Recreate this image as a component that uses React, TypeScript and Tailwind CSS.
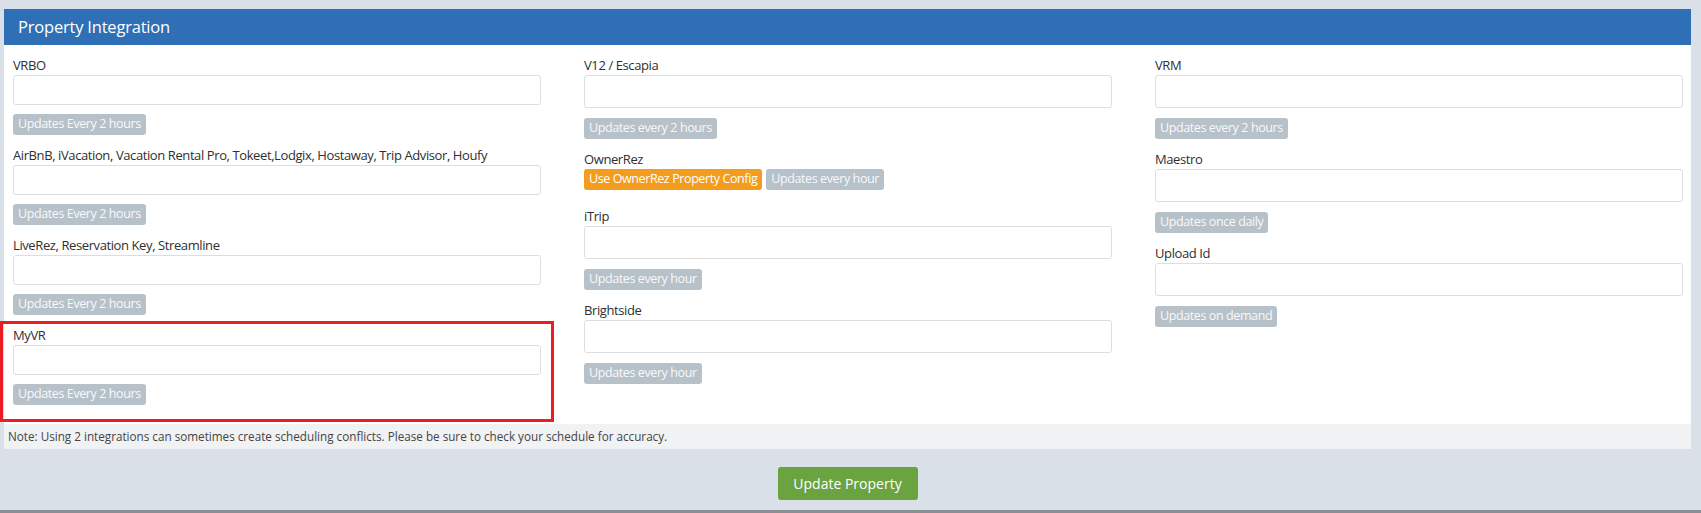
import React from "react";

type Field = {
  label: string;
  badges: { text: string; tone?: "gray" | "orange" }[];
  input?: boolean;
  gapAfter?: string;
};

const colOne: Field[] = [
  { label: "VRBO", badges: [{ text: "Updates Every 2 hours" }] },
  {
    label:
      "AirBnB, iVacation, Vacation Rental Pro, Tokeet,Lodgix, Hostaway, Trip Advisor, Houfy",
    badges: [{ text: "Updates Every 2 hours" }],
  },
  { label: "LiveRez, Reservation Key, Streamline", badges: [{ text: "Updates Every 2 hours" }] },
  { label: "MyVR", badges: [{ text: "Updates Every 2 hours" }] },
];

const colTwo: Field[] = [
  { label: "V12 / Escapia", badges: [{ text: "Updates every 2 hours" }] },
  {
    label: "OwnerRez",
    input: false,
    gapAfter: "mb-[17px]",
    badges: [
      { text: "Use OwnerRez Property Config", tone: "orange" },
      { text: "Updates every hour" },
    ],
  },
  { label: "iTrip", badges: [{ text: "Updates every hour" }] },
  { label: "Brightside", badges: [{ text: "Updates every hour" }] },
];

const colThree: Field[] = [
  { label: "VRM", badges: [{ text: "Updates every 2 hours" }] },
  { label: "Maestro", badges: [{ text: "Updates once daily" }] },
  { label: "Upload Id", badges: [{ text: "Updates on demand" }] },
];

function Badge({ text, tone = "gray" }: { text: string; tone?: "gray" | "orange" }) {
  return (
    <span
      className={
        tone === "orange"
          ? "inline-flex h-[21px] items-center rounded-[3px] bg-[#f49c1d] px-[5px] text-[12.5px] leading-none tracking-[-0.4px] text-white"
          : "inline-flex h-[21px] items-center rounded-[3px] bg-[#b7c1c9] px-[5px] text-[12.5px] leading-none tracking-[-0.4px] text-[#f7f9fa]"
      }
    >
      {text}
    </span>
  );
}

function FieldGroup({ field, tall }: { field: Field; tall: boolean }) {
  const hasInput = field.input !== false;
  return (
    <div className={field.gapAfter ?? "mb-[11px]"}>
      <label className="block h-[18px] text-[13px] leading-[18px] tracking-[-0.4px] text-[#2f2f2f]">
        {field.label}
      </label>
      {hasInput && (
        <input
          type="text"
          className={
            tall
              ? "mt-[1px] block h-[33px] w-full rounded-[3px] border border-[#dedede] bg-white outline-none"
              : "mt-[1px] block h-[30px] w-full rounded-[3px] border border-[#dedede] bg-white outline-none"
          }
        />
      )}
      <div
        className={
          hasInput ? (tall ? "mt-[10px] flex gap-[4px]" : "mt-[9px] flex gap-[4px]") : "mt-[1px] flex gap-[4px]"
        }
      >
        {field.badges.map((b) => (
          <Badge key={b.text} text={b.text} tone={b.tone} />
        ))}
      </div>
    </div>
  );
}

export default function App() {
  return (
    <div
      className="relative h-[513px] w-[1701px] overflow-hidden bg-[#d9e0e8]"
      style={{ fontFamily: '"Open Sans", "Noto Sans", sans-serif' }}
    >
      <div className="pl-[4px] pr-[10px] pt-[9px]">
        <section className="bg-white">
          <header className="flex h-[36px] items-center bg-[#2e6fb5] pl-[14px] text-[16.5px] tracking-[-0.2px] text-white">
            Property Integration
          </header>
          <div className="grid grid-cols-3 gap-x-[43px] pb-[8px] pl-[9px] pr-[8px] pt-[11px]">
            <div>
              {colOne.map((f) => (
                <FieldGroup key={f.label} field={f} tall={false} />
              ))}
            </div>
            <div>
              {colTwo.map((f) => (
                <FieldGroup key={f.label} field={f} tall />
              ))}
            </div>
            <div>
              {colThree.map((f) => (
                <FieldGroup key={f.label} field={f} tall />
              ))}
            </div>
          </div>
          <div className="flex h-[25px] items-center bg-[#f1f2f4] pl-[4px] text-[11.7px] text-[#444]">
            Note: Using 2 integrations can sometimes create scheduling conflicts. Please be sure to check
            your schedule for accuracy.
          </div>
        </section>
      </div>

      <div className="flex justify-center pl-[4px] pr-[10px] pt-[18px]">
        <button className="h-[33px] w-[140px] rounded-[3px] bg-[#6aa33f] text-[14px] text-white">
          Update Property
        </button>
      </div>

      <div className="absolute bottom-0 left-0 h-[3px] w-full bg-[#8a8d91]" />

      {/* highlight frame around the MyVR field */}
      <div className="pointer-events-none absolute left-0 top-[321px] h-[101px] w-[554px] border-[3px] border-[#ec1c24]" />
    </div>
  );
}
